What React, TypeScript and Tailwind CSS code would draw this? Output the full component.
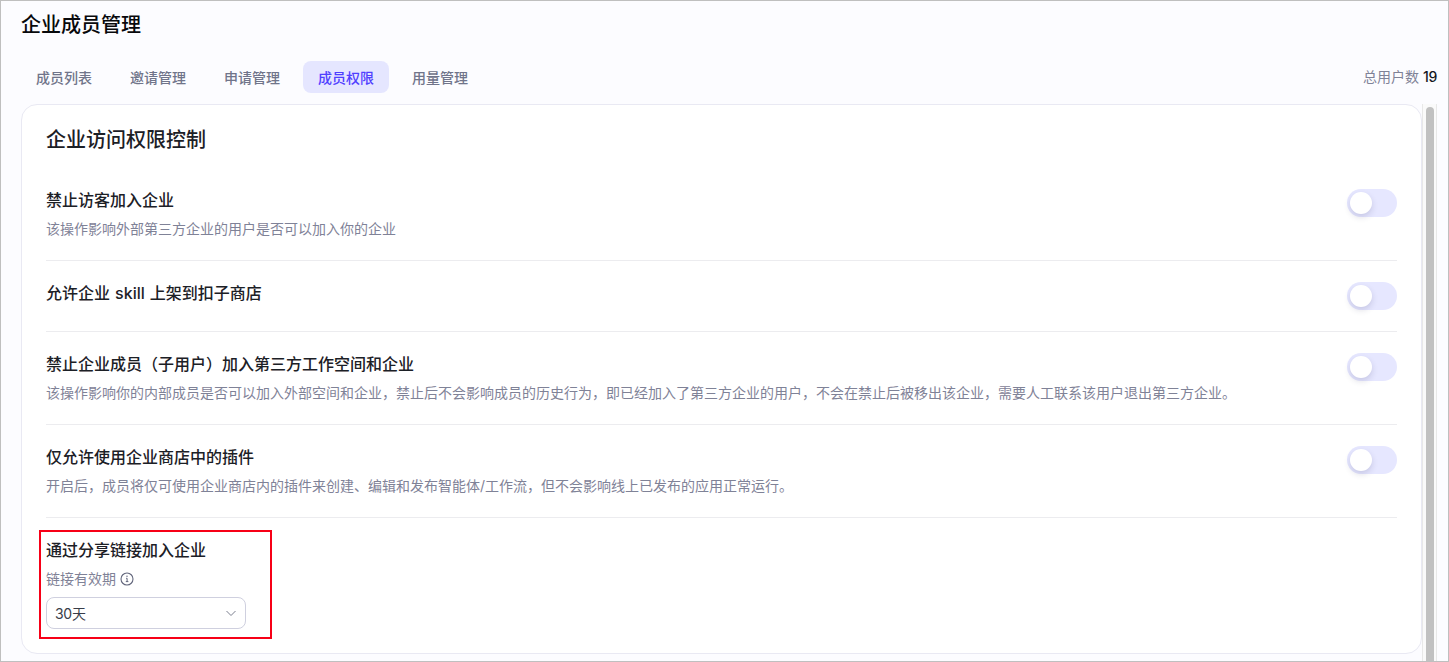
import React, { useState } from "react";

interface PermissionRowProps {
  title: string;
  description?: string;
}

const tabs = ["成员列表", "邀请管理", "申请管理", "成员权限", "用量管理"];

const permissions: PermissionRowProps[] = [
  {
    title: "禁止访客加入企业",
    description: "该操作影响外部第三方企业的用户是否可以加入你的企业",
  },
  { title: "允许企业 skill 上架到扣子商店" },
  {
    title: "禁止企业成员（子用户）加入第三方工作空间和企业",
    description:
      "该操作影响你的内部成员是否可以加入外部空间和企业，禁止后不会影响成员的历史行为，即已经加入了第三方企业的用户，不会在禁止后被移出该企业，需要人工联系该用户退出第三方企业。",
  },
  {
    title: "仅允许使用企业商店中的插件",
    description:
      "开启后，成员将仅可使用企业商店内的插件来创建、编辑和发布智能体/工作流，但不会影响线上已发布的应用正常运行。",
  },
];

function Toggle() {
  const [on, setOn] = useState(false);
  return (
    <button
      role="switch"
      aria-checked={on}
      onClick={() => setOn(!on)}
      className={`mt-px flex h-7 w-[50px] shrink-0 items-center rounded-full px-[3px] ${
        on ? "justify-end bg-[#5147ff]" : "bg-[#e6e7ff]"
      }`}
    >
      <span className="h-[22px] w-[22px] rounded-full bg-white shadow-[0_3px_6px_rgba(40,40,90,0.16)]" />
    </button>
  );
}

function PermissionRow({ title, description }: PermissionRowProps) {
  return (
    <div className="flex justify-between border-b border-[#ececef] py-5">
      <div className="min-h-[30px]">
        <p className="text-[16px] leading-6 font-medium text-[#1c2026] [word-spacing:0.8px]">
          {title}
        </p>
        {description && (
          <p className="mt-1.5 text-[14px] leading-[22px] whitespace-nowrap text-[#7f8297]">
            {description}
          </p>
        )}
      </div>
      <Toggle />
    </div>
  );
}

function InfoIcon() {
  return (
    <svg width="14" height="14" viewBox="0 0 14 14" fill="none" stroke="#62667c">
      <circle cx="7" cy="7" r="6" strokeWidth="1.1" />
      <path d="M6.1 6.3H7.1V9.6M5.8 9.6H8.4" strokeWidth="1" />
      <circle cx="7" cy="4.3" r="0.7" fill="#62667c" stroke="none" />
    </svg>
  );
}

function LinkExpiry() {
  return (
    <div className="relative pt-5">
      <p className="text-[16px] leading-6 font-medium text-[#1c2026]">通过分享链接加入企业</p>
      <div className="mt-1.5 flex items-center gap-1 text-[14px] leading-[22px] text-[#7f8297]">
        链接有效期
        <InfoIcon />
      </div>
      <button className="mt-[7px] flex h-8 w-[200px] items-center justify-between rounded-lg border border-[#cfd0df] px-2 text-[14px] tracking-[-0.3px] text-[#383d49]">
        30天
        <svg width="12" height="12" viewBox="0 0 12 12" fill="none" stroke="#7b7f8f">
          <path d="M1.5 4L6 8.5L10.5 4" strokeWidth="1" />
        </svg>
      </button>
      <div className="pointer-events-none absolute top-3 -left-[7px] h-[109px] w-[233px] border-2 border-[#f70017]" />
    </div>
  );
}

export default function App() {
  const [active, setActive] = useState("成员权限");
  return (
    <div className="flex h-[662px] w-[1449px] flex-col overflow-hidden border border-[#bfbfbf] bg-[#fcfcff] font-['Inter','Noto_Sans_CJK_SC',sans-serif]">
      <h1 className="mt-[9px] pl-5 text-[20px] leading-[30px] font-medium text-[#08090c]">
        企业成员管理
      </h1>
      <div className="mt-[21px] flex items-center justify-between pr-[11px] pl-5">
        <div className="flex gap-2">
          {tabs.map((tab) => (
            <button
              key={tab}
              onClick={() => setActive(tab)}
              className={`h-8 w-[86px] rounded-lg text-[14px] font-medium ${
                tab === active ? "bg-[#e5e6ff] text-[#5040ff]" : "text-[#70748a]"
              }`}
            >
              {tab}
            </button>
          ))}
        </div>
        <p className="text-[14px] leading-5 text-[#7f8297]">
          总用户数 <span className="font-medium tracking-[-0.3px] text-[#15171e]">19</span>
        </p>
      </div>
      <div className="mt-[11px] flex min-h-0 flex-1 pl-5">
        <div className="h-[550px] w-[1401px] shrink-0 rounded-2xl border border-[#e9e9f3] bg-white px-6 pt-5">
          <h2 className="mb-[13px] text-[20px] leading-[30px] font-medium text-[#1c2026]">
            企业访问权限控制
          </h2>
          {permissions.map((item) => (
            <PermissionRow key={item.title} {...item} />
          ))}
          <LinkExpiry />
        </div>
        <div className="flex w-[15px] justify-center border-x border-[#e8e8e8] bg-[#fafafa] pt-[3px]">
          <div className="w-2 rounded-t-full bg-[#c1c1c1]" />
        </div>
      </div>
    </div>
  );
}
